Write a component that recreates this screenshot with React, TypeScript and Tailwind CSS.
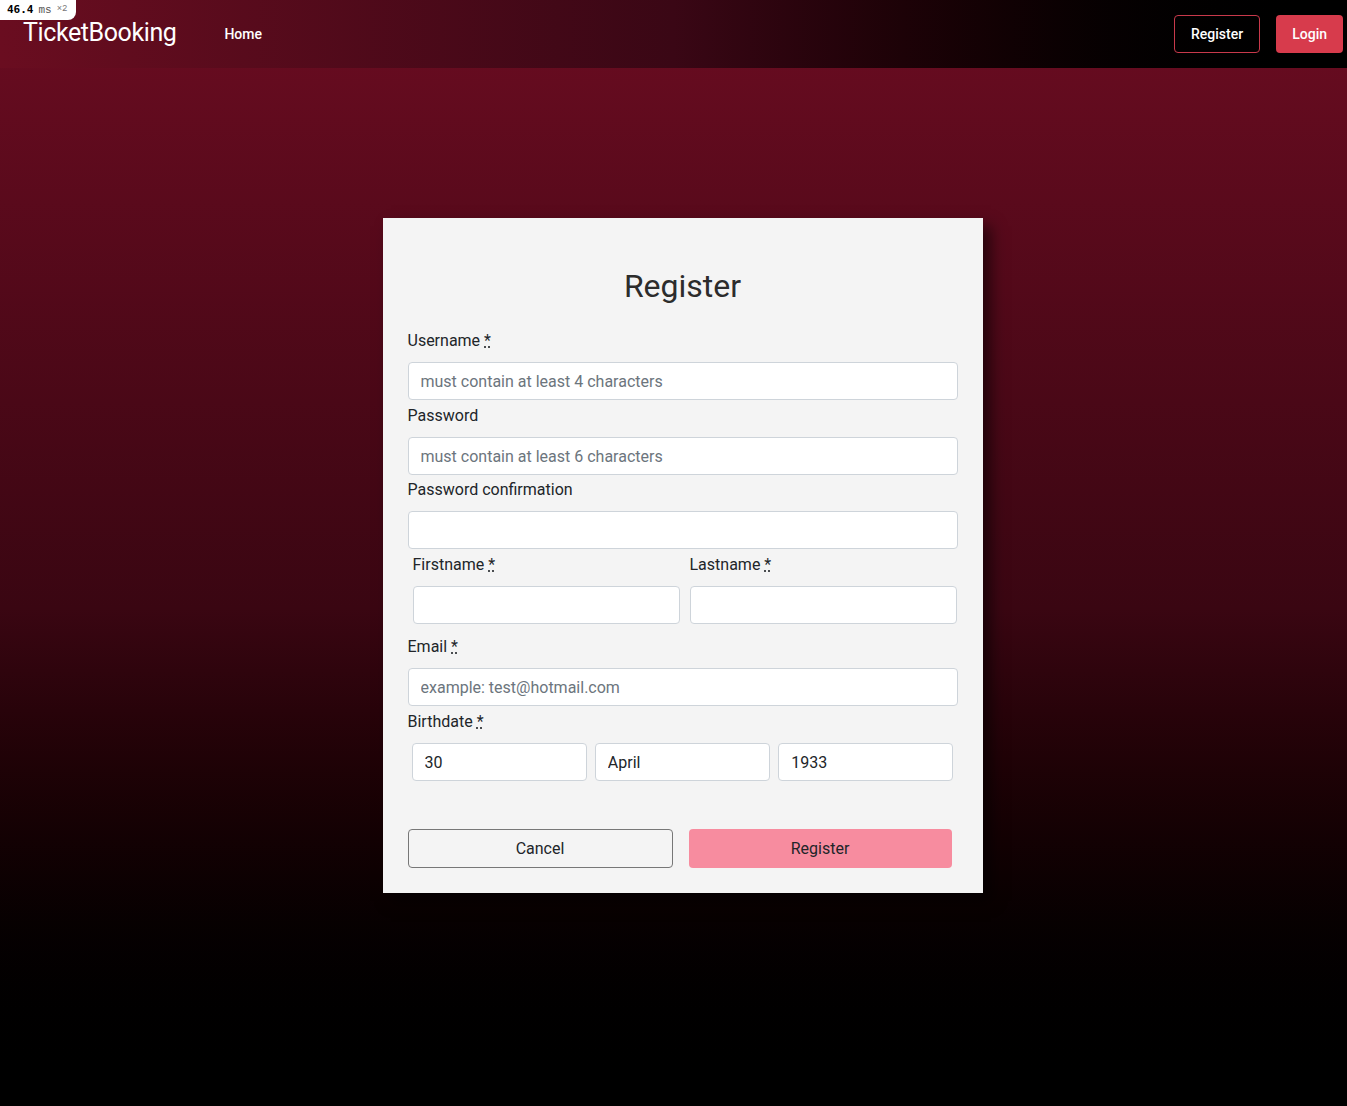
import { useState } from 'react'

const inputCls =
  'block w-full h-[38px] px-3 bg-white border border-[#ced4da] rounded-[4px] text-[16px] text-[#212529] placeholder:text-[#6c757d] focus:outline-none'

function Req() {
  return <abbr title="required">*</abbr>
}

function Label({ text, required }: { text: string; required?: boolean }) {
  return (
    <label className="h-[24px] leading-[24px] mt-[4px] mb-[9px] text-[16px] text-[#212529]">
      {text}
      {required && (
        <>
          {' '}
          <Req />
        </>
      )}
    </label>
  )
}

function Field({
  label,
  required,
  placeholder,
  className = '',
}: {
  label: string
  required?: boolean
  placeholder?: string
  className?: string
}) {
  return (
    <div className={`flex flex-col ${className}`}>
      <Label text={label} required={required} />
      <input type="text" placeholder={placeholder} className={inputCls} />
    </div>
  )
}

export default function App() {
  const [day] = useState('30')
  const [month] = useState('April')
  const [year] = useState('1933')

  return (
    <div className="min-h-[1106px] relative font-['Roboto',sans-serif] bg-gradient-to-b from-[#6b0c21] via-[#3a0612] via-55% to-black">
      {/* dev badge */}
      <div className="absolute left-0 top-0 z-10 h-[20px] pl-[7px] pr-[8px] flex items-center gap-[5px] bg-white rounded-br-[8px] text-black">
        <span className="font-['DejaVu_Sans_Mono',monospace] text-[11px] font-bold">46.4</span>
        <span className="font-['Liberation_Mono',monospace] text-[11px] text-[#555]">ms</span>
        <span className="font-['Liberation_Mono',monospace] text-[9px] text-[#777]">×2</span>
      </div>

      {/* Navbar */}
      <nav className="h-[68px] flex items-center justify-between pl-[23px] pr-[4px] bg-gradient-to-r from-[#6a0d20] via-[#3a0715] to-black">
        <div className="flex items-center">
          <span className="text-white text-[25px] tracking-[-0.4px] mt-[-2px]">TicketBooking</span>
          <a className="ml-[48px] text-white text-[14px] font-medium">Home</a>
        </div>
        <div className="flex items-center gap-4">
          <button className="h-[38px] px-4 border border-[#c8394b] rounded-[4px] text-white text-[14px] font-medium">
            Register
          </button>
          <button className="h-[38px] px-4 bg-[#d73b4c] rounded-[4px] text-white text-[14px] font-medium">
            Login
          </button>
        </div>
      </nav>

      {/* Card */}
      <div className="flex justify-center pt-[150px] pl-[18px]">
        <div className="w-[600px] bg-[#f4f4f4] px-[25px] pt-[48px] pb-[25px] shadow-[8px_8px_14px_rgba(0,0,0,0.55)]">
          <h1 className="text-center text-[32px] text-[#2c2c2c] leading-[40px] mb-[19px]">Register</h1>

          <div className="flex flex-col">
            <Field label="Username" required placeholder="must contain at least 4 characters" />
            <Field label="Password" placeholder="must contain at least 6 characters" />
            <Field label="Password confirmation" className="-mt-px" />
            <div className="grid grid-cols-2 gap-[10px] pl-[5px] pr-[1px]">
              <Field label="Firstname" required />
              <Field label="Lastname" required />
            </div>
            <div className="mt-[7px]">
              <Field label="Email" required placeholder="example: test@hotmail.com" />
            </div>
            <div className="flex flex-col">
              <Label text="Birthdate" required />
              <div className="grid grid-cols-3 gap-[8px] px-[4px]">
                <input className={inputCls} defaultValue={day} />
                <input className={inputCls} defaultValue={month} />
                <input className={inputCls} defaultValue={year} />
              </div>
            </div>
          </div>

          <div className="flex gap-4 mt-[48px] pr-[6px]">
            <button className="flex-1 h-[39px] border border-[#777] rounded-[4px] text-[16px] text-[#212529] bg-transparent">
              Cancel
            </button>
            <button className="flex-1 h-[39px] rounded-[4px] text-[16px] text-[#212529] bg-[#f78c9f]">
              Register
            </button>
          </div>
        </div>
      </div>
    </div>
  )
}
